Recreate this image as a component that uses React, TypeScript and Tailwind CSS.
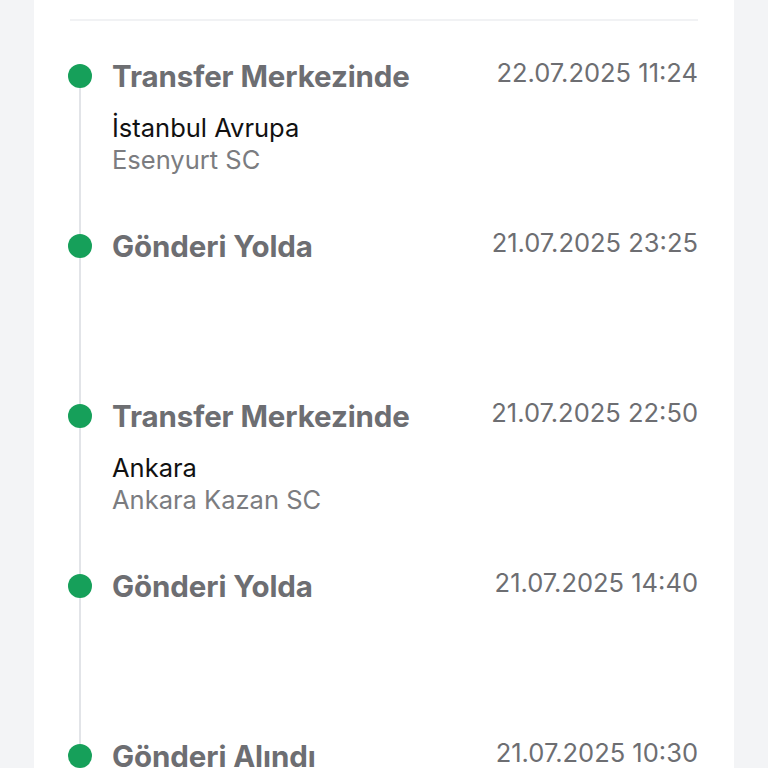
import type React from "react";

type Step = {
  title: string;
  date: string;
  city?: string;
  center?: string;
};

const steps: Step[] = [
  { title: "Transfer Merkezinde", date: "22.07.2025 11:24", city: "İstanbul Avrupa", center: "Esenyurt SC" },
  { title: "Gönderi Yolda", date: "21.07.2025 23:25" },
  { title: "Transfer Merkezinde", date: "21.07.2025 22:50", city: "Ankara", center: "Ankara Kazan SC" },
  { title: "Gönderi Yolda", date: "21.07.2025 14:40" },
  { title: "Gönderi Alındı", date: "21.07.2025 10:30" },
];

export default function App(): React.ReactElement {
  return (
    <div
      className="w-full h-[768px] overflow-hidden bg-[#f3f4f6] flex"
      style={{ fontFamily: "Inter, 'Noto Sans', sans-serif" }}
    >
      <div className="ml-[34px] w-[700px] h-full bg-white px-9">
        <div className="mt-[19px] h-[2px] bg-[#f1f2f4]" />
        <div className="mt-[43px] flex flex-col">
          {steps.map((s, i) => (
            <TimelineItem key={i} step={s} last={i === steps.length - 1} />
          ))}
        </div>
      </div>
    </div>
  );
}

function TimelineItem({ step, last }: { step: Step; last: boolean }) {
  return (
    <div className="h-[170px] flex gap-5 shrink-0 -ml-[2px]">
      <div className="w-6 flex flex-col items-center">
        <div className="w-6 h-6 rounded-full bg-[#16a05a] shrink-0" />
        {!last && <div className="w-[2px] flex-1 bg-[#e2e4e8]" />}
      </div>
      <div className="flex-1 min-w-0">
        <div className="h-6 flex items-center justify-between">
          <div className="text-[29.5px] leading-6 font-bold text-[#6d6e72] tracking-[-0.1px] whitespace-nowrap">
            {step.title}
          </div>
          <div className="text-[25.5px] leading-6 text-[#6d6e72] -mt-[6px] whitespace-nowrap">{step.date}</div>
        </div>
        {step.city && (
          <div className="mt-6">
            <div className="text-[25.5px] leading-8 text-[#111111]">{step.city}</div>
            <div className="text-[25.5px] leading-8 text-[#7b7c80]">{step.center}</div>
          </div>
        )}
      </div>
    </div>
  );
}
